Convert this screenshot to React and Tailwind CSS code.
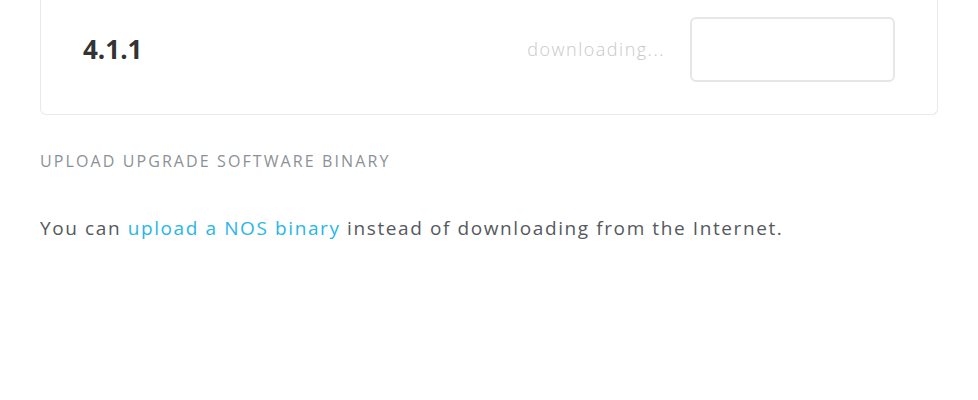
import React from 'react';

export default function App() {
  return (
    <div className="min-h-[400px] bg-white font-['Open_Sans',sans-serif]">
      <div className="px-10">
        {/* Version card */}
        <div className="border-x border-b border-[#e9e9e9] rounded-b-md flex items-center justify-between pl-[42px] pr-[42px] pt-[17px] pb-[32px]">
          <div className="text-[26px] font-bold text-[#333]">4.1.1</div>
          <div className="flex items-center gap-[25px]">
            <span className="text-[18px] font-light tracking-[1.5px] text-[#c8c8c8]">downloading...</span>
            <div className="w-[205px] h-[65px] border-2 border-[#e6e6e6] rounded-md bg-white"></div>
          </div>
        </div>

        {/* Upload section */}
        <div className="mt-[35px] text-[16px] text-[#8c9196] tracking-[2.1px] uppercase leading-[22px]">
          Upload upgrade software binary
        </div>
        <p className="mt-[43px] text-[19px] text-[#55595e] tracking-[1.6px] leading-[26px]">
          You can <a className="text-[#29b6e8]">upload a NOS binary</a> instead of downloading from the Internet.
        </p>
      </div>
    </div>
  );
}
